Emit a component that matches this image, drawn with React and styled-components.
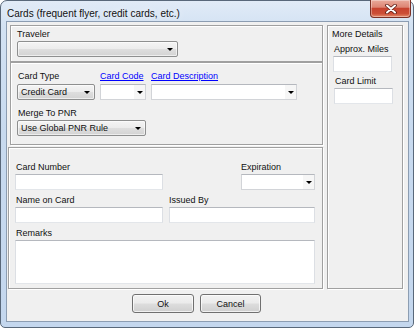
import styled, { createGlobalStyle } from "styled-components"

const GlobalStyle = createGlobalStyle`
  html, body {
    margin: 0;
    padding: 0;
    background: #fff;
  }
  body {
    font-family: "Liberation Sans", Arial, sans-serif;
    font-size: 9px;
    color: #111;
  }
`

const Window = styled.div`
  box-sizing: border-box;
  width: 414px;
  height: 328px;
  display: flex;
  flex-direction: column;
  padding: 0 5px 6px 6px;
  border: 1px solid #59687a;
  border-radius: 7px 7px 5px 5px;
  background: linear-gradient(
    180deg,
    #e1ebf7 0%,
    #d3e2f3 8%,
    #c8daef 40%,
    #c4d7ee 100%
  );
`

const TitleBar = styled.div`
  height: 21px;
  display: flex;
  justify-content: space-between;
  align-items: flex-start;
`

const Title = styled.span`
  padding-top: 7px;
  font-size: 10px;
  line-height: 11px;
  color: #111;
  text-shadow: 0 0 6px #fff;
`

const CloseButton = styled.div`
  box-sizing: border-box;
  width: 41px;
  height: 18px;
  margin-top: -1px;
  margin-right: -3px;
  display: flex;
  align-items: center;
  justify-content: center;
  border: 1px solid #7b3126;
  border-top: none;
  border-radius: 0 0 4px 4px;
  background: linear-gradient(
    180deg,
    #e9aa9b 0%,
    #dd8574 42%,
    #c7432f 50%,
    #cc4f37 80%,
    #e58c6c 100%
  );
  box-shadow: inset 0 0 0 1px rgba(255, 255, 255, 0.35);
`

const Client = styled.div`
  flex: 1;
  display: flex;
  flex-direction: column;
  padding: 3px 5px 0 1px;
  background: #f0f0f0;
  box-shadow: 0 0 0 1px #8c9db2;
`

const MainRow = styled.div`
  display: flex;
  gap: 4px;
`

const LeftColumn = styled.div`
  width: 315px;
  display: flex;
  flex-direction: column;
`

const Section = styled.div`
  box-sizing: border-box;
  margin-left: ${({ $inset }) => $inset || 0}px;
  margin-top: ${({ $gap }) => $gap || 0}px;
  padding: ${({ $pad }) => $pad};
  border: 1px solid #a0a0a0;
  box-shadow: inset 1px 1px 0 #fff, 1px 1px 0 #fff;
`

const RightPanel = styled(Section)`
  width: 76px;
  display: flex;
  flex-direction: column;
`

const FieldRow = styled.div`
  display: flex;
  gap: 5px;
`

const Field = styled.div`
  display: flex;
  flex-direction: column;
  gap: ${({ $gap }) => ($gap === undefined ? 2 : $gap)}px;
  margin-top: ${({ $top }) => $top || 0}px;
  margin-left: ${({ $left }) => $left || 0}px;
  justify-self: ${({ $end }) => ($end ? "end" : "stretch")};
  grid-column: ${({ $span }) => ($span ? "1 / span 2" : "auto")};
`

const Label = styled.span`
  display: block;
  height: 10px;
  line-height: 10px;
  white-space: nowrap;
  padding-left: ${({ $indent }) => $indent || 0}px;
`

const LinkLabel = styled(Label)`
  color: #0000ff;
  text-decoration: underline;
`

const SelectBox = styled.div`
  box-sizing: border-box;
  width: ${({ $w }) => $w}px;
  height: 16px;
  display: flex;
  align-items: stretch;
  justify-content: space-between;
  border: 1px solid ${({ $flat }) => ($flat ? "#d2d4d8" : "#8e8f8f")};
  border-top-color: ${({ $flat }) => ($flat ? "#b5b8be" : "#8e8f8f")};
  border-radius: ${({ $flat }) => ($flat ? 0 : 2)}px;
  background: ${({ $flat }) =>
    $flat
      ? "#fff"
      : "linear-gradient(180deg, #f4f4f4 0%, #ececec 48%, #dedede 52%, #d3d3d3 100%)"};
  box-shadow: ${({ $flat }) =>
    $flat ? "none" : "inset 0 0 0 1px rgba(255,255,255,0.6)"};
`

const SelectText = styled.span`
  padding-left: 3px;
  line-height: 14px;
  white-space: nowrap;
`

const DropButton = styled.span`
  width: ${({ $flat }) => ($flat ? 11 : 14)}px;
  display: flex;
  align-items: center;
  justify-content: center;
  background: ${({ $flat }) => ($flat ? "#f6f6f6" : "transparent")};
  &::after {
    content: "";
    width: 0;
    height: 0;
    border-left: 3px solid transparent;
    border-right: 3px solid transparent;
    border-top: 3px solid #000;
  }
`

const TextBox = styled.div`
  box-sizing: border-box;
  width: ${({ $w }) => ($w ? `${$w}px` : "100%")};
  height: ${({ $h }) => $h || 16}px;
  background: #fff;
  border: 1px solid;
  border-color: #b5b8be #dcdfe4 #e3e6ea #dcdfe4;
`

const BottomGrid = styled.div`
  display: grid;
  grid-template-columns: 148px 146px;
  column-gap: 6px;
  row-gap: 5px;
`

const ButtonRow = styled.div`
  display: flex;
  gap: 6px;
  margin-top: 5px;
  padding-left: 124px;
`

const Button = styled.div`
  box-sizing: border-box;
  width: ${({ $w }) => $w}px;
  height: 19px;
  display: flex;
  align-items: center;
  justify-content: center;
  border: 1px solid #707070;
  border-radius: 3px;
  background: linear-gradient(
    180deg,
    #f2f2f2 0%,
    #ebebeb 48%,
    #dddddd 52%,
    #cfcfcf 100%
  );
  box-shadow: inset 0 0 0 1px rgba(255, 255, 255, 0.7);
`

const Select = ({ w, flat, children }) => (
  <SelectBox $w={w} $flat={flat}>
    <SelectText>{children}</SelectText>
    <DropButton $flat={flat} />
  </SelectBox>
)

const CloseGlyph = () => (
  <svg width="12" height="10" viewBox="0 0 12 10">
    <path d="M2 1.5 L10 8.5 M10 1.5 L2 8.5" stroke="#5a1a12" strokeWidth="3.6" strokeLinecap="round" />
    <path d="M2 1.5 L10 8.5 M10 1.5 L2 8.5" stroke="#fff" strokeWidth="2" strokeLinecap="round" />
  </svg>
)

const App = () => {
  return (
    <>
      <GlobalStyle />
      <Window>
        <TitleBar>
          <Title>Cards (frequent flyer, credit cards, etc.)</Title>
          <CloseButton>
            <CloseGlyph />
          </CloseButton>
        </TitleBar>
        <Client>
          <MainRow>
            <LeftColumn>
              <Section $inset={2} $pad="3px 6px 4px 6px">
                <Field>
                  <Label>Traveler</Label>
                  <Select w={161} />
                </Field>
              </Section>

              <Section $inset={2} $pad="8px 6px 8px 6px">
                <FieldRow>
                  <Field $gap={3}>
                    <Label $indent={1}>Card Type</Label>
                    <Select w={78}>Credit Card</Select>
                  </Field>
                  <Field $gap={3}>
                    <LinkLabel>Card Code</LinkLabel>
                    <Select w={46} flat />
                  </Field>
                  <Field $gap={3}>
                    <LinkLabel>Card Description</LinkLabel>
                    <Select w={146} flat />
                  </Field>
                </FieldRow>
                <Field $top={8}>
                  <Label $indent={1}>Merge To PNR</Label>
                  <Select w={129}>Use Global PNR Rule</Select>
                </Field>
              </Section>

              <Section $gap={2} $pad="14px 6px 4px 6px">
                <BottomGrid>
                  <Field>
                    <Label $indent={1}>Card Number</Label>
                    <TextBox />
                  </Field>
                  <Field $end>
                    <Label>Expiration</Label>
                    <Select w={74} flat />
                  </Field>
                  <Field>
                    <Label $indent={1}>Name on Card</Label>
                    <TextBox />
                  </Field>
                  <Field>
                    <Label>Issued By</Label>
                    <TextBox />
                  </Field>
                  <Field $span>
                    <Label $indent={1}>Remarks</Label>
                    <TextBox $h={44} />
                  </Field>
                </BottomGrid>
              </Section>
            </LeftColumn>

            <RightPanel $pad="3px 0 0 4px">
              <Label>More Details</Label>
              <Field $top={5} $left={1}>
                <Label $indent={1}>Approx. Miles</Label>
                <TextBox $w={59} />
              </Field>
              <Field $top={4} $left={2}>
                <Label $indent={1}>Card Limit</Label>
                <TextBox $w={59} />
              </Field>
            </RightPanel>
          </MainRow>

          <ButtonRow>
            <Button $w={62}>Ok</Button>
            <Button $w={61}>Cancel</Button>
          </ButtonRow>
        </Client>
      </Window>
    </>
  )
}

export default App
